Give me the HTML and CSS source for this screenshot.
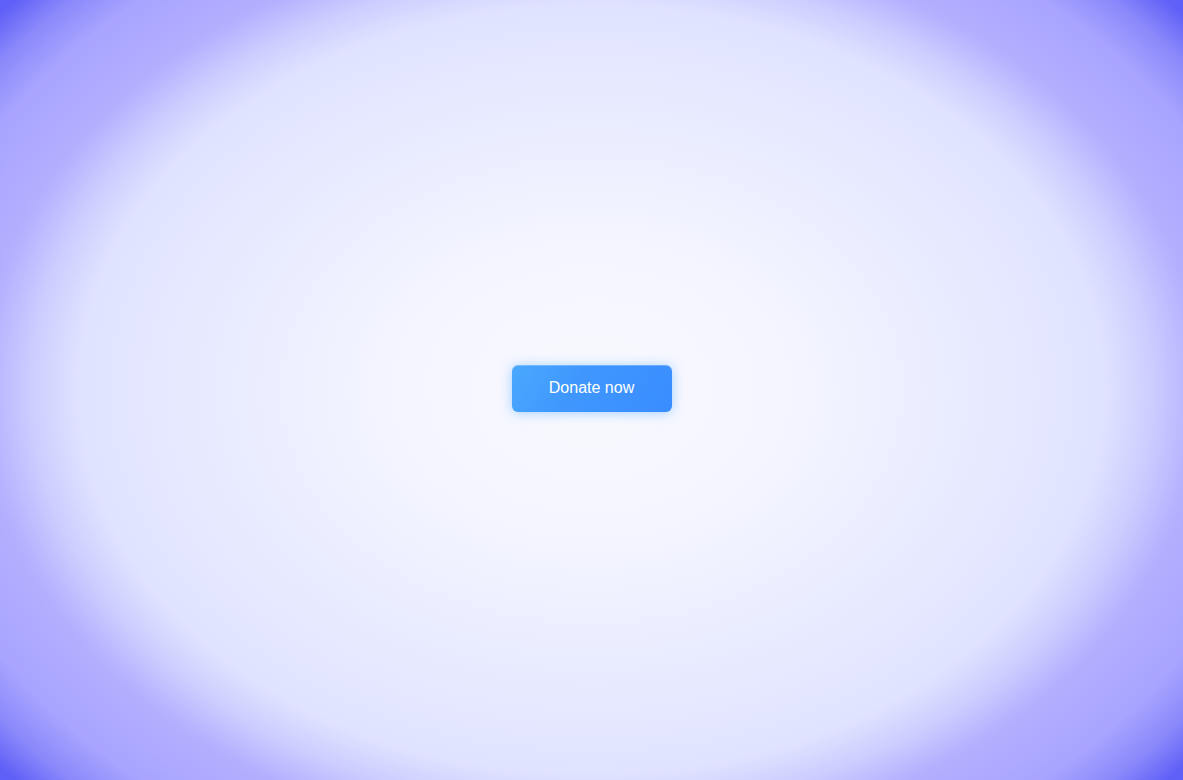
FILE: index.html
```html
<!DOCTYPE html>
<html lang="en">
<head>
<meta charset="utf-8">
<title>Donate</title>
<link rel="stylesheet" href="styles.css">
</head>
<body>
<main class="stage">
  <button class="donate-btn" type="button">Donate now</button>
</main>
</body>
</html>
```

FILE: styles.css
```css
html, body {
  margin: 0;
  padding: 0;
  height: 100%;
}
body {
  font-family: "Liberation Sans", Arial, sans-serif;
  background: radial-gradient(ellipse 800px 600px at 50% 50%,
    #f9faff 0%,
    #f4f5ff 24%,
    #e9ecff 46%,
    #e0e3ff 64%,
    #cdcdff 70%,
    #b3b0ff 76%,
    #a8a4ff 86%,
    #8a88fb 92%,
    #5f60f7 97%);
  background-color: #5d5ef6;
}
.stage {
  min-height: 100vh;
  display: flex;
  align-items: center;
  justify-content: center;
}
.donate-btn {
  width: 160px;
  height: 47px;
  margin-top: -3px;
  padding: 0 0 2px;
  border: none;
  border-radius: 6px;
  background: linear-gradient(120deg, #4aa8fd 0%, #3f97fe 40%, #3a8dff 100%);
  color: #ffffff;
  font-family: "Liberation Sans", Arial, sans-serif;
  font-size: 16px;
  box-shadow: 0 1px 12px rgba(80, 170, 255, 0.5), inset 0 1px 0 rgba(255,255,255,0.25);
  cursor: pointer;
}
```
